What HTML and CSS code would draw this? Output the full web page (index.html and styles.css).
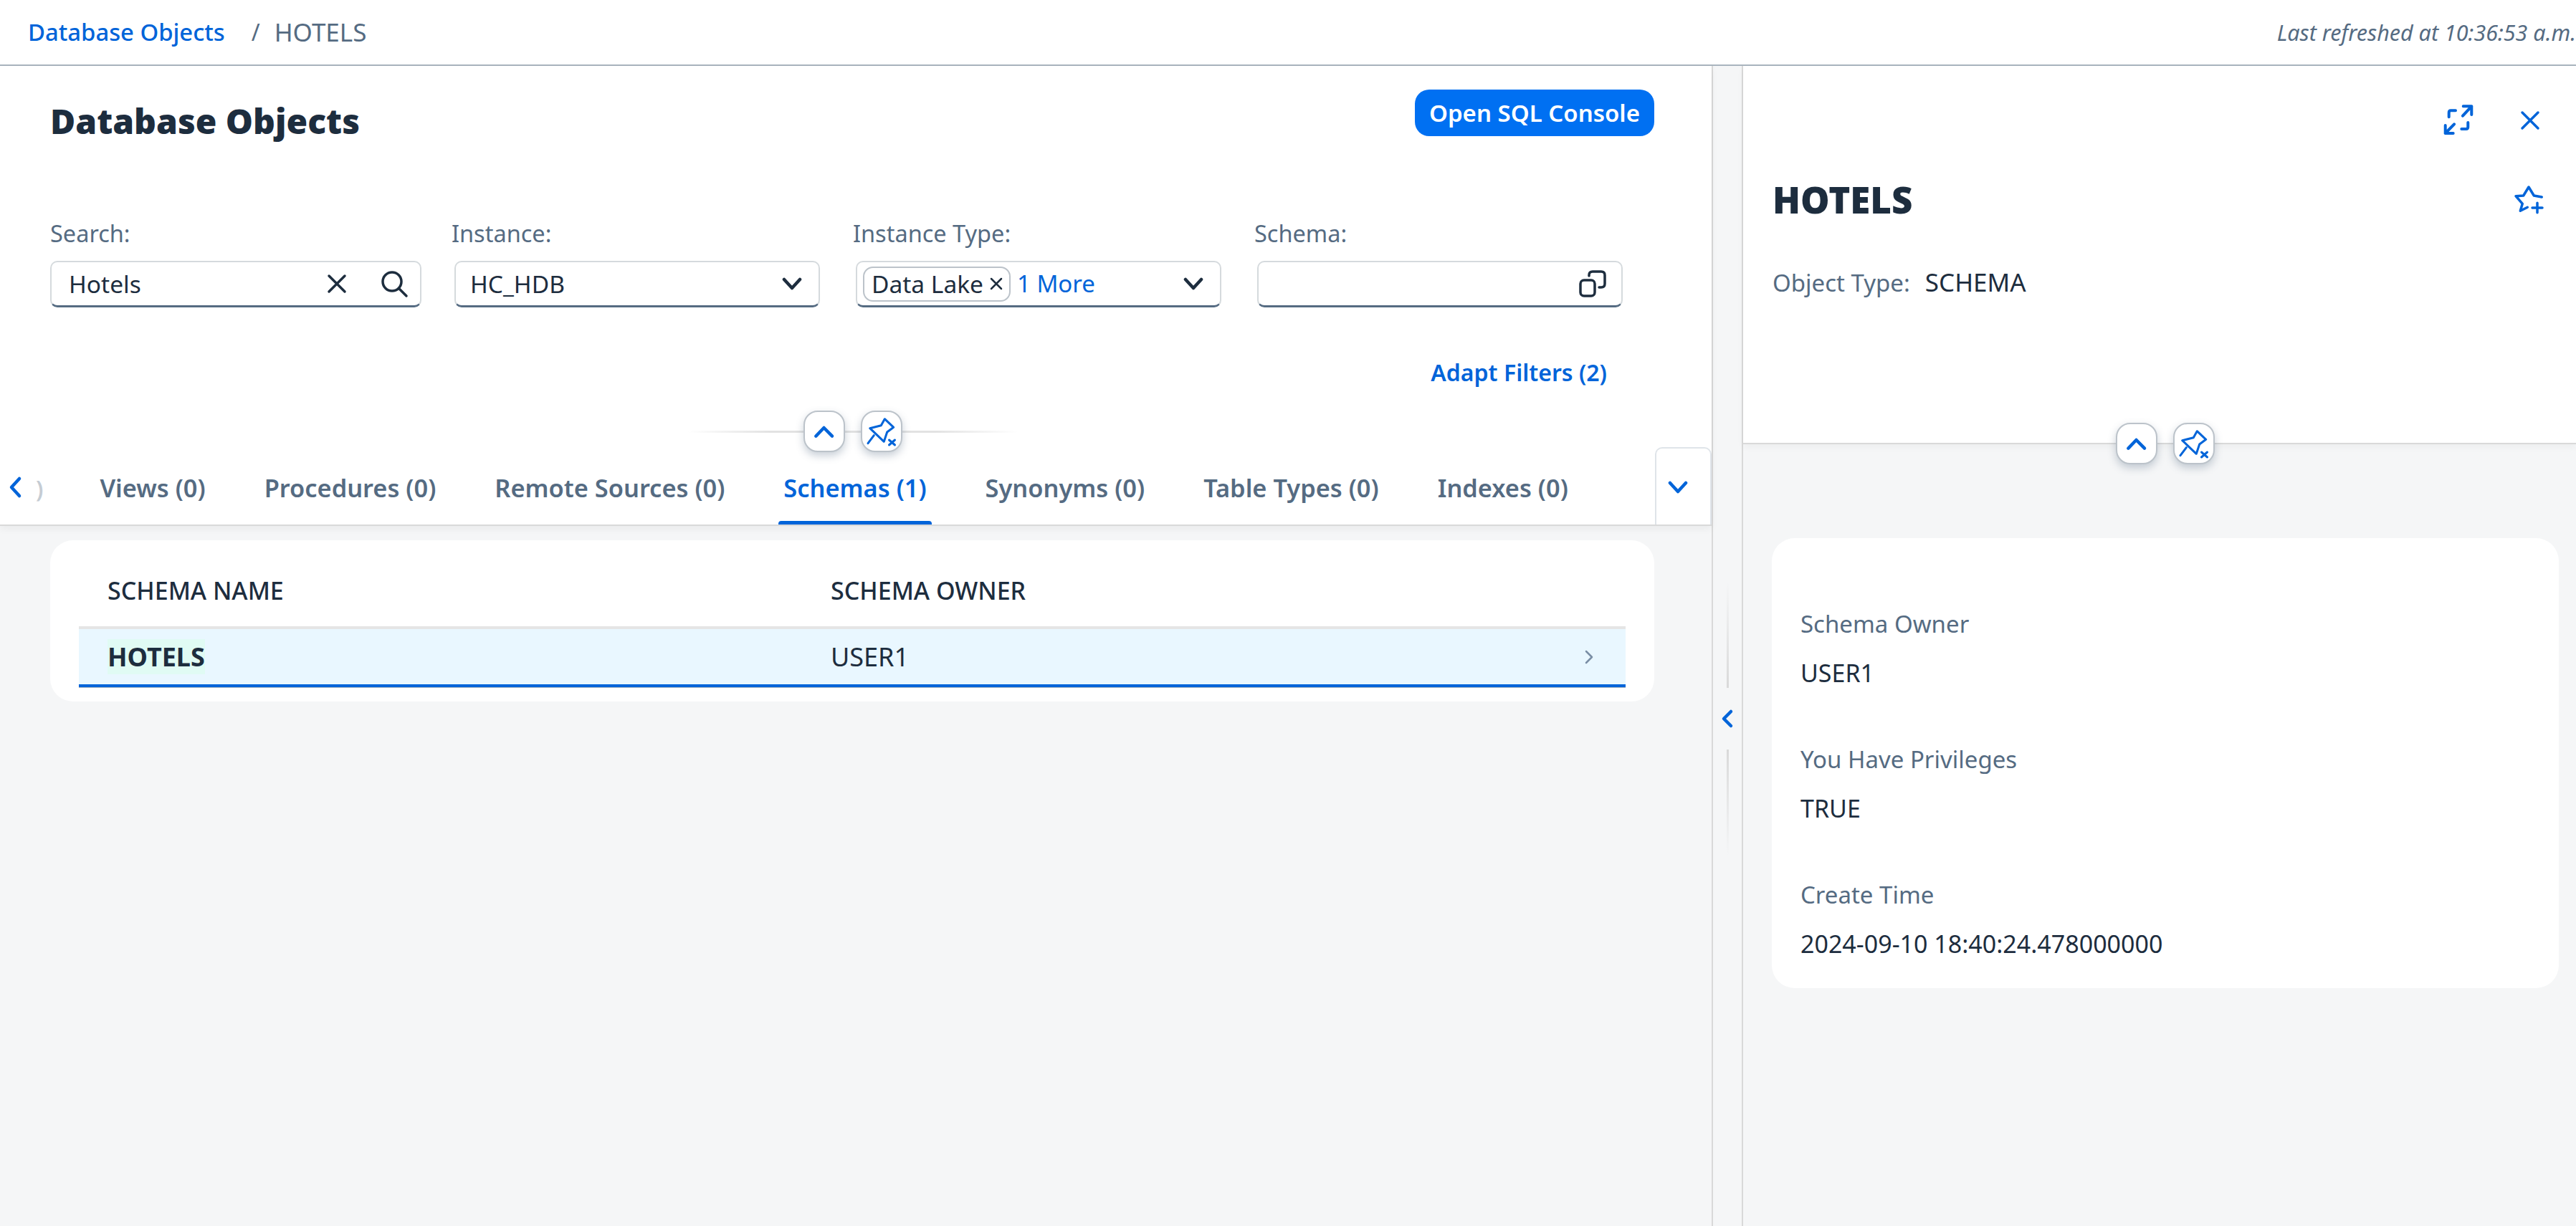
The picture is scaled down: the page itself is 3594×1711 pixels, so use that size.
FILE: index.html
```html
<!DOCTYPE html>
<html lang="en">
<head>
  <meta charset="UTF-8">
  <title>Database Objects</title>
  <link rel="stylesheet" href="styles.css">
</head>
<body>
  <header class="topbar">
    <nav class="crumbs">
      <a class="crumb-link">Database Objects</a>
      <span class="crumb-sep">/</span>
      <span class="crumb-current">HOTELS</span>
    </nav>
    <span class="refreshed">Last refreshed at 10:36:53 a.m.</span>
  </header>

  <main class="layout">
    <section class="list-panel">
      <div class="list-head">
        <div class="title-row">
          <h1 class="page-title">Database Objects</h1>
          <button class="primary-btn">Open SQL Console</button>
        </div>

        <div class="filters">
          <div class="field">
            <label class="field-label">Search:</label>
            <div class="field-box field-search">
              <span class="field-text">Hotels</span>
              <svg class="icon-clear" viewBox="0 0 30 30"><path d="M4 4 26 26M26 4 4 26"/></svg>
              <svg class="icon-search" viewBox="0 0 42 42"><circle cx="18" cy="18" r="13"/><path d="M28 28 38 38"/></svg>
            </div>
          </div>
          <div class="field">
            <label class="field-label">Instance:</label>
            <div class="field-box">
              <span class="field-text">HC_HDB</span>
              <svg class="icon-caret" viewBox="0 0 28 20"><path d="M3 4 14 16 25 4"/></svg>
            </div>
          </div>
          <div class="field">
            <label class="field-label">Instance Type:</label>
            <div class="field-box field-tokens">
              <span class="token">Data Lake<svg class="token-x" viewBox="0 0 20 20"><path d="M3 3 17 17M17 3 3 17"/></svg></span>
              <a class="more-link">1 More</a>
              <svg class="icon-caret" viewBox="0 0 28 20"><path d="M3 4 14 16 25 4"/></svg>
            </div>
          </div>
          <div class="field">
            <label class="field-label">Schema:</label>
            <div class="field-box">
              <span class="field-text"></span>
              <svg class="icon-help" viewBox="0 0 40 40"><rect x="3" y="15" width="20" height="22" rx="5"/><path d="M15 9V8Q15 3 20 3H32Q37 3 37 8V20Q37 25 32 25H29"/></svg>
            </div>
          </div>
        </div>

        <div class="adapt-row"><a class="adapt-link">Adapt Filters (2)</a></div>

        <div class="collapse-bar">
          <span class="round-btn">
            <svg viewBox="0 0 58 58"><path class="blue-line thick" d="M17.3 35.7 28.5 24 40 35.7"/></svg>
          </span>
          <span class="round-btn">
            <svg viewBox="0 0 58 58"><path class="blue-line" d="M12.7 24.7 28.3 20.7 33.3 11.7 45.7 23.3 36.7 30 32.3 43.3ZM18.3 34.7 10 45.7M39.5 41 47.5 48M47.5 41 39.5 48"/></svg>
          </span>
        </div>

        <div class="tabs">
          <svg class="tab-arrow" viewBox="0 0 20 32"><path d="M15 4 4 16 15 28"/></svg>
          <span class="tab-clip">)</span>
          <div class="tab-list">
            <a class="tab">Views (0)</a>
            <a class="tab">Procedures (0)</a>
            <a class="tab">Remote Sources (0)</a>
            <a class="tab tab-active">Schemas (1)</a>
            <a class="tab">Synonyms (0)</a>
            <a class="tab">Table Types (0)</a>
            <a class="tab">Indexes (0)</a>
          </div>
          <button class="tab-more">
            <svg viewBox="0 0 28 20"><path d="M3 4 14 16 25 4"/></svg>
          </button>
        </div>
      </div>

      <div class="table-card">
        <div class="table-head">
          <span>SCHEMA NAME</span>
          <span>SCHEMA OWNER</span>
        </div>
        <div class="table-row">
          <span class="cell-name"><mark class="hit">HOTELS</mark></span>
          <span>USER1</span>
          <svg class="row-nav" viewBox="0 0 14 22"><path d="M3 3 11 11 3 19"/></svg>
        </div>
      </div>
    </section>

    <div class="splitter">
      <span class="split-line split-top"></span>
      <svg class="split-arrow" viewBox="0 0 18 28"><path d="M14 4 4 14 14 24"/></svg>
      <span class="split-line split-bottom"></span>
    </div>

    <aside class="detail-panel">
      <div class="detail-head">
        <div class="detail-actions">
          <svg class="icon-expand" viewBox="0 0 44 44"><path d="M28 15.7 40.3 2.3M28.7 2.3H40.3V14M16 27.3 3.7 40M3.7 29V40H14.7M18 8.3H11.3Q8.7 8.3 8.7 11.3V17.3M26.3 34H32.7Q35.3 34 35.3 31.3V25"/></svg>
          <svg class="icon-close" viewBox="0 0 28 28"><path d="M3 3 25 25M25 3 3 25"/></svg>
        </div>
        <div class="detail-title-row">
          <h2 class="detail-title">HOTELS</h2>
          <svg class="icon-star" viewBox="0 0 44 44"><path d="M40.3 19 29.3 17 22 5 14.7 17 4 17.7 13.3 28.3 10.3 38.3 20.3 33.3M27 34H41M34 27.3V40.7"/></svg>
        </div>
        <div class="detail-meta">
          <span class="meta-label">Object Type:</span>
          <span class="meta-value">SCHEMA</span>
        </div>
        <div class="detail-collapse">
          <span class="round-btn">
            <svg viewBox="0 0 58 58"><path class="blue-line thick" d="M17.3 35.7 28.5 24 40 35.7"/></svg>
          </span>
          <span class="round-btn">
            <svg viewBox="0 0 58 58"><path class="blue-line" d="M12.7 24.7 28.3 20.7 33.3 11.7 45.7 23.3 36.7 30 32.3 43.3ZM18.3 34.7 10 45.7M39.5 41 47.5 48M47.5 41 39.5 48"/></svg>
          </span>
        </div>
      </div>

      <div class="detail-card">
        <div class="detail-item">
          <div class="item-label">Schema Owner</div>
          <div class="item-value">USER1</div>
        </div>
        <div class="detail-item">
          <div class="item-label">You Have Privileges</div>
          <div class="item-value">TRUE</div>
        </div>
        <div class="detail-item">
          <div class="item-label">Create Time</div>
          <div class="item-value">2024-09-10 18:40:24.478000000</div>
        </div>
      </div>
    </aside>
  </main>
</body>
</html>
```

FILE: styles.css
```css
html, body {
  margin: 0;
  padding: 0;
  height: 100%;
}

body {
  display: flex;
  flex-direction: column;
  background-color: #f5f6f7;
  color: #1d2d3e;
  font-family: "Noto Sans", "Open Sans", sans-serif;
  font-size: 32px;
  line-height: 40px;
  overflow: hidden;
}

svg {
  fill: none;
  stroke-linecap: round;
  stroke-linejoin: round;
  flex: none;
}

h1, h2 {
  margin: 0;
  font-weight: 900;
  font-size: 48px;
  line-height: 60px;
}

/* top bar */
.topbar {
  height: 90px;
  flex: none;
  display: flex;
  align-items: center;
  justify-content: space-between;
  padding: 0 0 0 39px;
  background: #fff;
  border-bottom: 2px solid #a9b4be;
}

.crumbs {
  display: flex;
  align-items: center;
}

.crumb-link {
  color: #0064d9;
  font-size: 32.8px;
  font-weight: 500;
}

.crumb-sep {
  color: #556b82;
  margin: 0 20px 0 37px;
}

.crumb-current {
  color: #556b82;
  font-size: 35px;
}

.refreshed {
  color: #556b82;
  font-style: italic;
  font-size: 30.5px;
}

.layout {
  flex: 1;
  display: flex;
  min-height: 0;
}

/* left side */
.list-panel {
  width: 2388px;
  flex: none;
}

.list-head {
  position: relative;
  background: #fff;
  border-bottom: 2px solid #d9d9d9;
  box-shadow: 0 4px 10px rgba(0, 0, 0, 0.05);
}

.title-row {
  display: flex;
  justify-content: space-between;
  align-items: flex-start;
  padding: 33px 80px 0 70px;
  height: 65px;
}

.page-title {
  margin-top: 14px;
}

.primary-btn {
  height: 65px;
  width: 334px;
  padding: 0;
  border: 0;
  border-radius: 20px;
  background: #0070f2;
  color: #fff;
  font: 600 33px "Noto Sans", sans-serif;
}

.filters {
  display: flex;
  padding-left: 70px;
  margin-top: 116px;
}

.field {
  width: 560px;
}

.field-label {
  display: block;
  color: #556b82;
  font-size: 32.5px;
  margin-bottom: 18px;
}

.field-box {
  height: 65px;
  box-sizing: border-box;
  display: flex;
  align-items: center;
  margin: 0 46px 0 4px;
  padding: 0 23px 0 20px;
  background: #fff;
  border: 2px solid #d5dadd;
  border-bottom: 3px solid #556b82;
  border-radius: 10px;
  font-size: 33.5px;
}

.field:first-child .field-box {
  margin: 0 42px 0 0;
  padding-left: 24px;
}

.field-text {
  flex: 1;
}

.field-tokens {
  padding-left: 8px;
}

.token {
  height: 49px;
  box-sizing: border-box;
  display: flex;
  align-items: center;
  padding: 0 8px 0 10px;
  border: 2px solid #bcc3ca;
  border-radius: 14px;
}

.token-x {
  width: 20px;
  height: 20px;
  margin-left: 8px;
  stroke: #1d2d3e;
  stroke-width: 2.5;
}

.more-link {
  flex: 1;
  margin-left: 9px;
  color: #0064d9;
  font-size: 33px;
}

.icon-clear {
  width: 30px;
  height: 30px;
  margin-right: 44px;
  stroke: #1d2d3e;
  stroke-width: 3.5;
}

.icon-search {
  width: 42px;
  height: 42px;
  margin-right: -8px;
  stroke: #1d2d3e;
  stroke-width: 3.5;
}

.icon-caret {
  width: 28px;
  height: 20px;
  stroke: #1d2d3e;
  stroke-width: 4.5;
}

.icon-help {
  width: 40px;
  height: 40px;
  margin-right: -3px;
  stroke: #1d2d3e;
  stroke-width: 3.5;
}

.adapt-row {
  text-align: right;
  padding-right: 146px;
  margin-top: 71px;
}

.adapt-link {
  color: #0064d9;
  font-weight: 600;
}

/* collapse and pin buttons over the header edge */
.collapse-bar {
  position: absolute;
  left: 960px;
  top: 481px;
  width: 460px;
  display: flex;
  justify-content: center;
  gap: 22px;
  background: linear-gradient(to right, transparent, #e2e2e2 25%, #e2e2e2 75%, transparent) center / 100% 3px no-repeat;
}

.round-btn {
  width: 58px;
  height: 58px;
  box-sizing: border-box;
  display: block;
  background: #fff;
  border: 2px solid #bcc3ca;
  border-radius: 20px;
  box-shadow: 0 5px 12px rgba(85, 107, 130, 0.32);
}

.round-btn svg {
  display: block;
  width: 58px;
  height: 58px;
  margin: -2px;
}

.blue-line {
  stroke: #0064d9;
  stroke-width: 3;
}

.blue-line.thick {
  stroke-width: 4.5;
}

/* tabs */
.tabs {
  display: flex;
  height: 108px;
  margin-top: 84px;
}

.tab-arrow {
  width: 20px;
  height: 32px;
  margin: 40px 0 0 12px;
  stroke: #0064d9;
  stroke-width: 4.5;
}

.tab-clip {
  margin: 38px 0 0 18px;
  color: #c5ccd3;
  font-weight: 600;
}

.tab-list {
  flex: 1;
  display: flex;
  gap: 82px;
  padding-left: 79px;
}

.tab {
  position: relative;
  display: flex;
  align-items: center;
  padding-top: 6px;
  color: #556b82;
  font-size: 34.4px;
  font-weight: 600;
  white-space: nowrap;
}

.tab-active {
  color: #0064d9;
}

.tab-active::after {
  content: "";
  position: absolute;
  left: -7px;
  right: -7px;
  bottom: 0;
  height: 5px;
  border-radius: 4px 4px 0 0;
  background: #0064d9;
}

.tab-more {
  width: 79px;
  height: 108px;
  padding: 4px 16px 0 0;
  background: #fff;
  border: 2px solid #dfe4e9;
  border-bottom: 0;
  border-radius: 10px 10px 0 0;
}

.tab-more svg {
  width: 28px;
  height: 20px;
  stroke: #0064d9;
  stroke-width: 4.5;
}

/* table */
.table-card {
  margin: 20px 80px 0 70px;
  padding: 0 40px 20px;
  background: #fff;
  border-radius: 32px;
}

.table-head {
  display: grid;
  grid-template-columns: 1009px 1fr;
  align-items: center;
  box-sizing: border-box;
  height: 124px;
  padding: 20px 40px 0;
  border-bottom: 4px solid #e5e5e5;
  font-size: 34px;
  font-weight: 500;
}

.table-row {
  display: grid;
  grid-template-columns: 1009px 1fr auto;
  align-items: center;
  height: 77px;
  padding: 0 40px;
  background: #e9f7ff;
  border-bottom: 4px solid #0064d9;
  box-shadow: 0 1px 0 #a9b4be;
  font-size: 36px;
}

.cell-name {
  font-weight: 700;
}

.hit {
  background: #e0fbf4;
  color: inherit;
}

.row-nav {
  width: 14px;
  height: 22px;
  margin-right: 4px;
  stroke: #7a8ea5;
  stroke-width: 2.5;
}

/* splitter between panels */
.splitter {
  width: 40px;
  flex: none;
  display: flex;
  flex-direction: column;
  align-items: center;
  border-left: 2px solid #d9d9d9;
  border-right: 2px solid #d9d9d9;
}

.split-line {
  width: 3px;
  height: 148px;
}

.split-top {
  margin-top: 720px;
  background: linear-gradient(to bottom, transparent, #d9d9d9);
}

.split-bottom {
  background: linear-gradient(to top, transparent, #d9d9d9);
}

.split-arrow {
  width: 18px;
  height: 28px;
  margin: 29px 0;
  stroke: #0064d9;
  stroke-width: 4.5;
}

/* right side */
.detail-panel {
  flex: 1;
  min-width: 0;
}

.detail-head {
  position: relative;
  height: 528px;
  box-sizing: border-box;
  padding: 54px 44px 0 41px;
  background: #fff;
  border-bottom: 2px solid #d9d9d9;
  box-shadow: 0 4px 10px rgba(0, 0, 0, 0.04);
}

.detail-actions {
  display: flex;
  justify-content: flex-end;
  align-items: center;
  height: 44px;
  gap: 64px;
  padding-right: 6px;
}

.icon-expand {
  width: 44px;
  height: 44px;
  stroke: #0064d9;
  stroke-width: 4;
}

.icon-close {
  width: 28px;
  height: 28px;
  stroke: #0064d9;
  stroke-width: 3.5;
}

.detail-title-row {
  display: flex;
  justify-content: space-between;
  align-items: center;
  margin-top: 58px;
}

.detail-title {
  font-size: 51px;
}

.icon-star {
  width: 44px;
  height: 44px;
  stroke: #0064d9;
  stroke-width: 3.5;
}

.detail-meta {
  display: flex;
  align-items: baseline;
  gap: 21px;
  margin-top: 66px;
}

.meta-label {
  color: #556b82;
  font-size: 33px;
}

.meta-value {
  font-size: 35px;
}

.detail-collapse {
  position: absolute;
  left: 520px;
  top: 498px;
  display: flex;
  gap: 22px;
}

.detail-card {
  margin: 131px 24px 0 40px;
  padding: 100px 40px 42px;
  background: #fff;
  border-radius: 32px;
}

.detail-item + .detail-item {
  margin-top: 81px;
}

.item-label {
  color: #556b82;
  font-size: 33px;
}

.item-value {
  margin-top: 28px;
  font-size: 34px;
}
```
